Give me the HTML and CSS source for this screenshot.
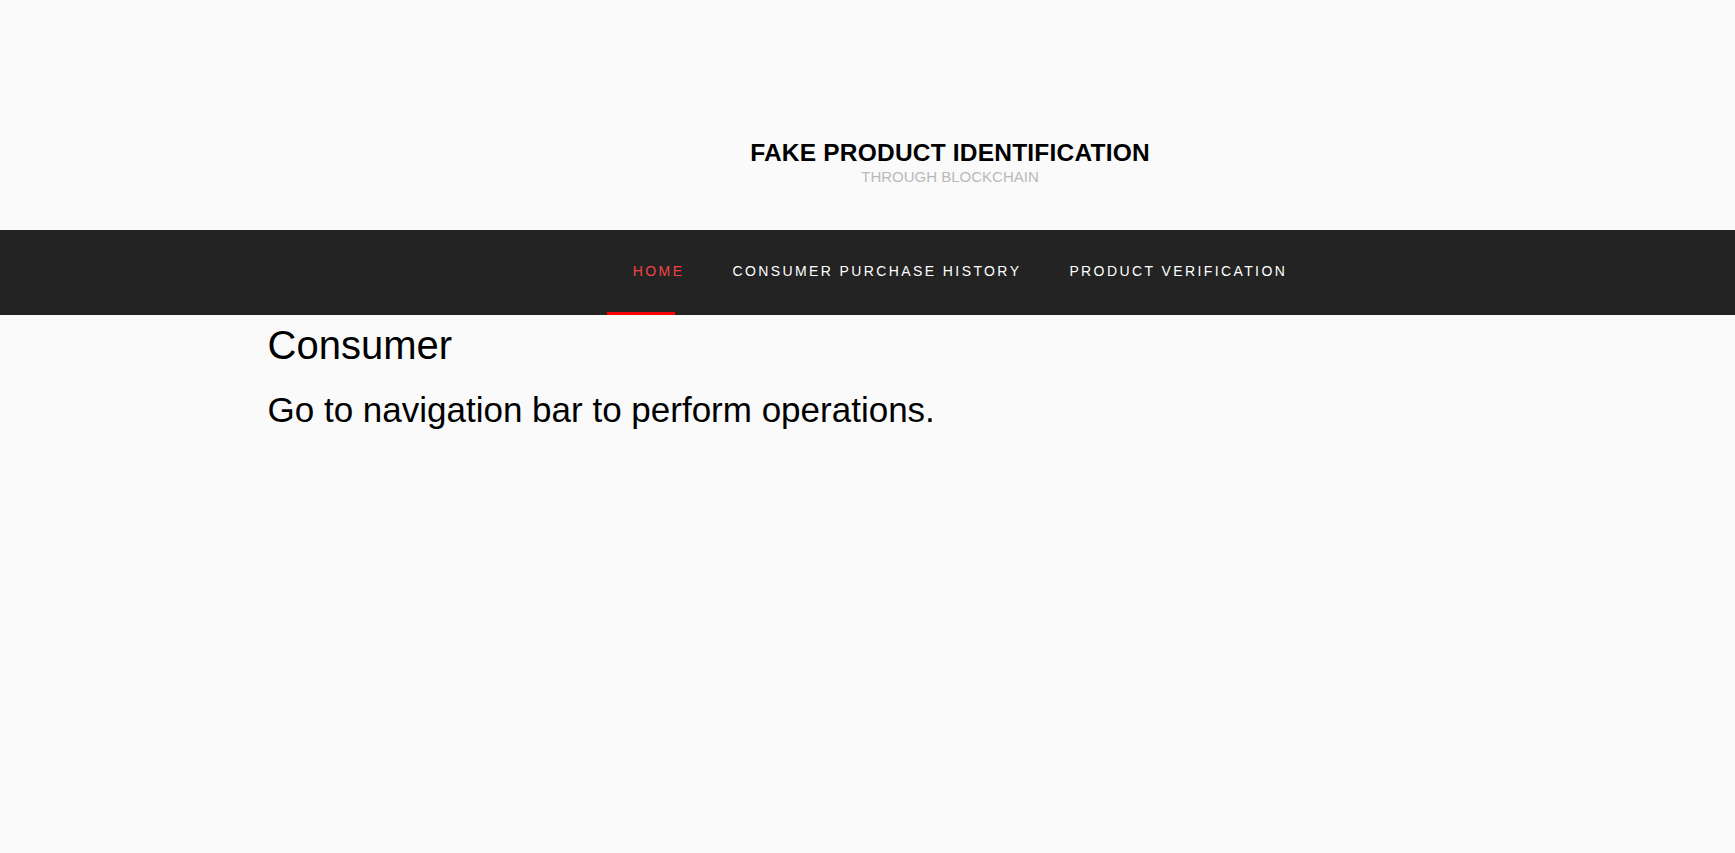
FILE: index.html
```html
<!DOCTYPE html>
<html lang="en">
<head>
<meta charset="utf-8">
<title>Fake Product Identification</title>
<link rel="stylesheet" href="styles.css">
</head>
<body>
<header class="site-header">
  <div class="brand">
    <div class="brand-title">FAKE PRODUCT IDENTIFICATION</div>
    <div class="brand-sub">THROUGH BLOCKCHAIN</div>
  </div>
</header>
<nav class="main-nav">
  <ul class="menu">
    <li class="menu-item active"><a href="#">HOME</a></li>
    <li class="menu-item"><a href="#">CONSUMER PURCHASE HISTORY</a></li>
    <li class="menu-item"><a href="#">PRODUCT VERIFICATION</a></li>
  </ul>
</nav>
<main class="content">
  <h1 class="page-title">Consumer</h1>
  <p class="page-lead">Go to navigation bar to perform operations.</p>
</main>
</body>
</html>
```
FILE: styles.css
```css
html, body {
  margin: 0;
  padding: 0;
}
body {
  background: #fafafa;
  font-family: "Liberation Sans", Arial, sans-serif;
  color: #000;
  min-height: 853px;
}
.site-header {
  box-sizing: border-box;
  height: 230px;
  padding-top: 139px;
  padding-left: 165px;
  text-align: center;
}
.brand-title {
  font-size: 24.5px;
  font-weight: bold;
  line-height: 1.15;
  letter-spacing: 0.2px;
  color: #000;
}
.brand-sub {
  font-size: 15px;
  line-height: 1.15;
  color: #b9b9b9;
  margin-top: 1px;
}
.main-nav {
  background: #232323;
  height: 85px;
  display: flex;
  justify-content: center;
  padding-left: 185px;
}
.menu {
  list-style: none;
  margin: 0;
  padding: 0;
  display: flex;
  align-items: stretch;
}
.menu-item {
  position: relative;
  display: flex;
}
.menu-item a {
  display: flex;
  align-items: center;
  padding: 0 24px 3px;
  font-size: 14px;
  letter-spacing: 2.4px;
  color: #ffffff;
  text-decoration: none;
}
.menu-item.active a {
  color: #f24444;
}
.menu-item.active::after {
  content: "";
  position: absolute;
  left: -2px;
  bottom: 0;
  width: 68px;
  height: 3px;
  background: #ff0000;
}
.content {
  max-width: 1200px;
  margin: 0 auto;
  padding-top: 7px;
}
.page-title {
  margin: 0;
  font-size: 40px;
  font-weight: normal;
  line-height: 1.15;
}
.page-lead {
  margin: 21.5px 0 0;
  font-size: 35px;
  line-height: 1.15;
}
```
